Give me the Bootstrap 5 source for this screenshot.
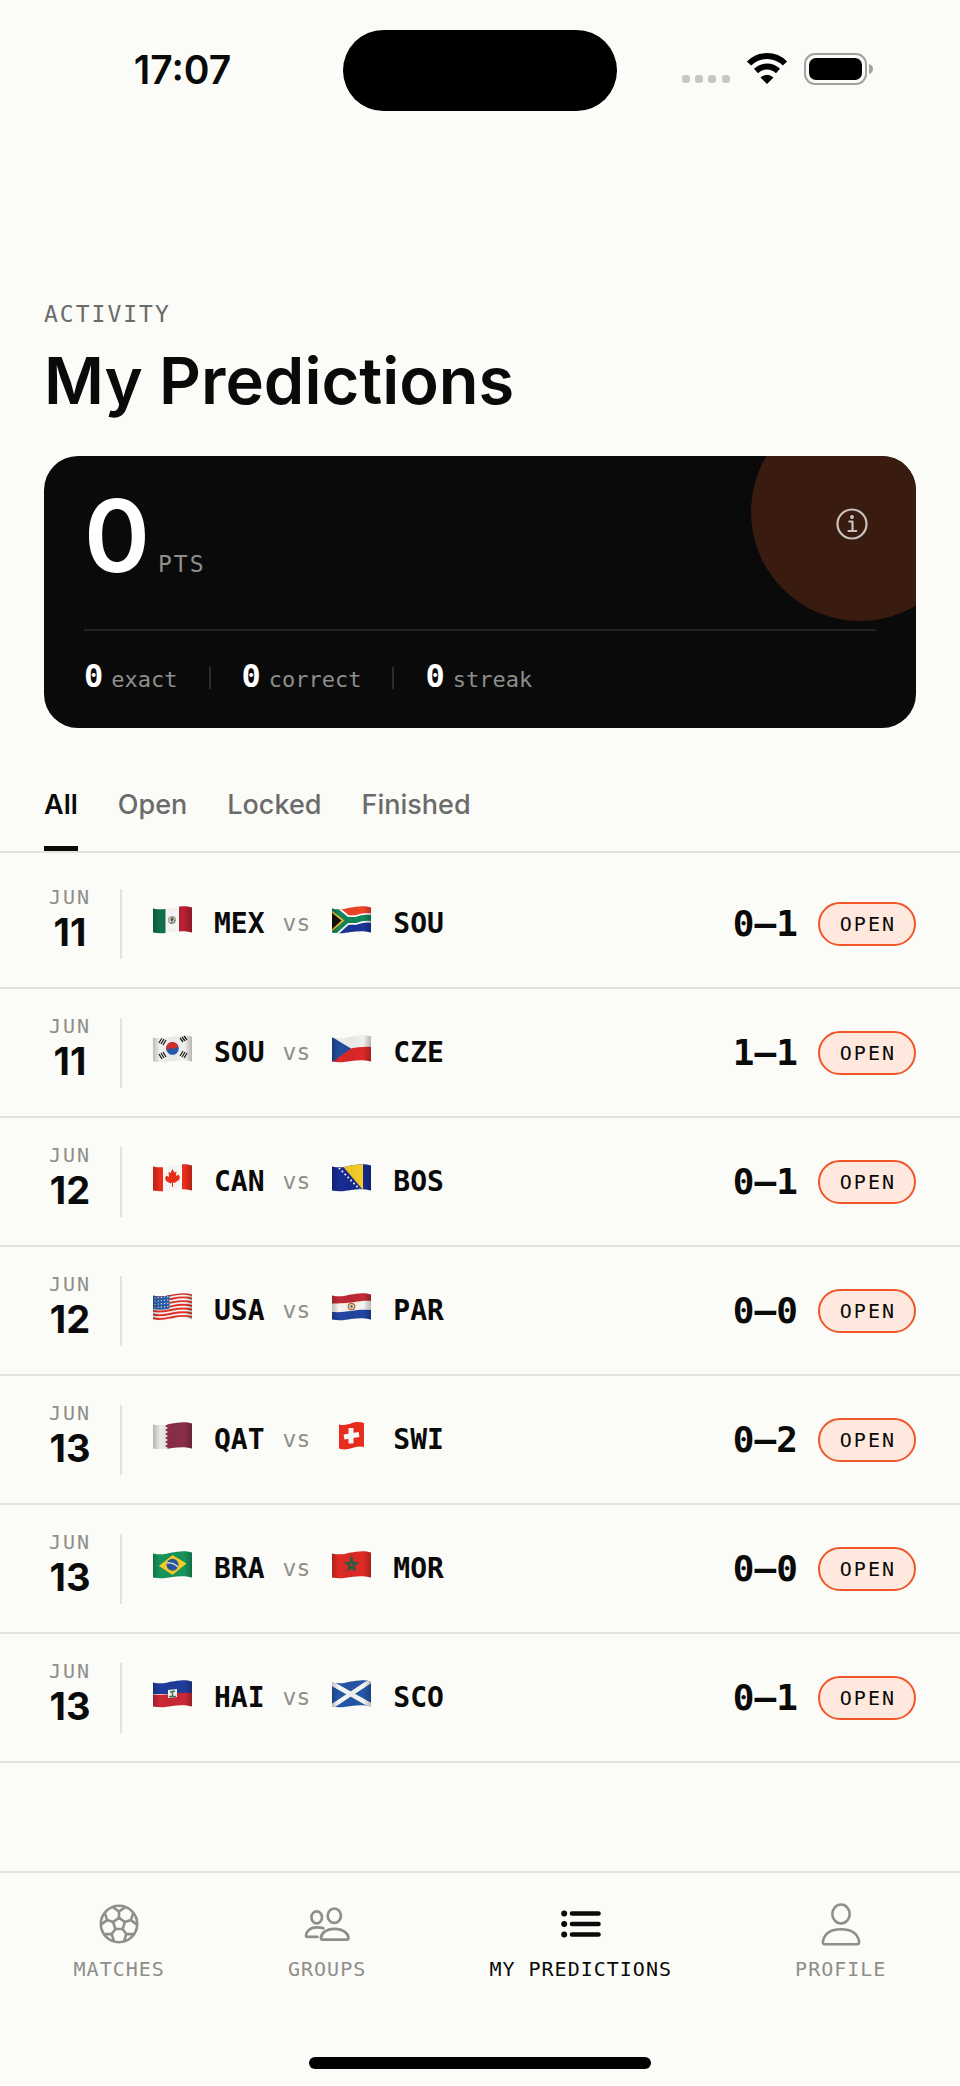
<!DOCTYPE html>
<html lang="en">
<head>
    <meta charset="UTF-8">
    <meta name="viewport" content="width=device-width, initial-scale=1.0">
    <title>My Predictions</title>
    <link href="https://cdn.jsdelivr.net/npm/bootstrap@5.3.0/dist/css/bootstrap.min.css" rel="stylesheet">
    <style>
        body {
            background-color: #fbfbf7;
            color: #0a0a0a;
            font-family: Inter, 'Liberation Sans', sans-serif;
        }
        svg {
            display: block;
            flex-shrink: 0;
        }
        .mono {
            font-family: 'DejaVu Sans Mono', 'Liberation Mono', monospace;
        }
        .gutter {
            padding-left: 44px;
            padding-right: 44px;
        }

        /* Status bar */
        .status-bar {
            display: grid;
            grid-template-columns: 1fr 274px 1fr;
            padding-top: 30px;
        }
        .clock {
            font-size: 39px;
            font-weight: 600;
            line-height: 80px;
            padding-left: 22px;
        }
        .island {
            height: 81px;
            background: #000;
            border-radius: 41px;
        }
        .status-icons {
            gap: 16px;
            padding-right: 87px;
            padding-bottom: 4px;
        }

        /* Heading */
        .page-head {
            padding-top: 191px;
            padding-bottom: 35px;
        }
        .eyebrow {
            font-size: 23px;
            line-height: 24px;
            letter-spacing: 2px;
            color: #6b6b6b;
            margin-bottom: 15px;
        }
        h1 {
            font-size: 65px;
            font-weight: 600;
            line-height: 80px;
        }

        /* Points card */
        .points-card {
            background: #0a0a0a;
            color: #fff;
            border-radius: 34px;
            padding: 30px 40px 32px;
            margin: 0 44px;
        }
        .glow {
            width: 218px;
            height: 218px;
            top: -53px;
            right: -53px;
            background: #3a1b10;
        }
        .total {
            font-size: 100px;
            font-weight: 600;
            line-height: 100px;
        }
        .unit {
            font-size: 23px;
            letter-spacing: 2px;
            color: #8e8e8a;
        }
        .info-btn {
            width: 48px;
            height: 48px;
            margin-top: 14px;
            color: #c9c3c0;
        }
        .stats {
            border-top: 2px solid #232323;
            margin-top: 43px;
            padding-top: 29px;
        }
        .stat-value {
            font-size: 32px;
            font-weight: 700;
            line-height: 32px;
        }
        .stat-name {
            font-size: 22px;
            line-height: 32px;
            color: #8e8e8a;
        }
        .stat-rule {
            width: 2px;
            height: 22px;
            margin: 0 31px;
            background: #2c2c2c;
        }

        /* Filter tabs */
        .filters {
            gap: 40px;
            margin-top: 60px;
            border-bottom: 2px solid #e2e2de;
        }
        .filter-tab {
            font-size: 27px;
            font-weight: 500;
            line-height: 34px;
            padding: 0 0 24px;
            color: #6b6b6b;
            background: none;
            border: 0;
            border-bottom: 5px solid transparent;
        }
        .filter-tab.active {
            font-weight: 600;
            color: #0a0a0a;
            border-bottom-color: #0a0a0a;
        }

        /* Matches */
        .match-list {
            padding-top: 7px;
        }
        .match-row {
            height: 129px;
            border-bottom: 2px solid #e2e2de;
        }
        .match-date {
            width: 52px;
            padding-bottom: 8px;
        }
        .month {
            font-size: 20px;
            line-height: 24px;
            letter-spacing: 2px;
            color: #8e8e8a;
        }
        .day {
            font-size: 38px;
            font-weight: 700;
            line-height: 46px;
        }
        .date-rule {
            width: 2px;
            height: 70px;
            margin: 0 31px 0 24px;
            background: #e2e2de;
        }
        .team {
            gap: 22px;
            font-size: 28px;
            font-weight: 700;
        }
        .versus {
            font-size: 23px;
            margin: 0 22px 0 18px;
            color: #8e8e8a;
        }
        .score {
            font-size: 36px;
            font-weight: 700;
            margin-right: 20px;
        }
        .status-pill {
            font-size: 20px;
            line-height: 40px;
            letter-spacing: 2px;
            padding: 0 18px 0 20px;
            border: 2px solid #f0562a;
            background: #ffe8dd;
        }

        /* Bottom navigation */
        .tab-bar {
            border-top: 2px solid #e2e2de;
            padding: 29px 12px 0;
        }
        .tab-link {
            gap: 11px;
            font-size: 20px;
            line-height: 24px;
            letter-spacing: 1px;
            color: #8e8e8a;
            text-decoration: none;
        }
        .tab-link.active {
            color: #0a0a0a;
        }
        .tab-icon {
            height: 44px;
        }
        .home-bar {
            width: 342px;
            height: 12px;
            margin: 76px auto 17px;
            background: #000;
        }
    </style>
</head>
<body>
    <!-- Shared shapes for the flags -->
    <svg width="0" height="0" class="position-absolute" aria-hidden="true">
        <defs>
            <clipPath id="wave"><path d="M0 3.5C8 5.5 14 3.5 19 2.5S32 0 39 2.5V27.5C32 25.5 25 26 19 27S8 29 0 27.5Z"/></clipPath>
            <clipPath id="waveSmall"><path d="M7 3.5C13 5 17 3 20 2S28 .5 32 2V26C28 25 24 25.5 20 27S12 29 7 27.5Z"/></clipPath>
            <linearGradient id="shade">
                <stop offset="0" stop-color="#000" stop-opacity=".22"/>
                <stop offset=".18" stop-color="#000" stop-opacity="0"/>
                <stop offset=".5" stop-color="#000" stop-opacity=".04"/>
                <stop offset=".8" stop-color="#000" stop-opacity="0"/>
                <stop offset="1" stop-color="#000" stop-opacity=".25"/>
            </linearGradient>
        </defs>
    </svg>

    <div class="d-flex flex-column min-vh-100">
        <header class="status-bar">
            <div class="clock text-center">17:07</div>
            <div class="island"></div>
            <div class="status-icons d-flex align-items-center justify-content-end">
                <svg width="48" height="32" viewBox="0 0 48 32" fill="#c6c6c3" aria-hidden="true">
                    <rect x="0" y="22" width="8" height="8" rx="3"/><rect x="13" y="22" width="8" height="8" rx="3"/>
                    <rect x="26" y="22" width="8" height="8" rx="3"/><rect x="40" y="22" width="8" height="8" rx="3"/>
                </svg>
                <svg width="42" height="32" viewBox="0 0 42 32" aria-hidden="true">
                    <path d="M3 10.5C13 .5 29 .5 39 10.5" fill="none" stroke="#000" stroke-width="6"/>
                    <path d="M10 18C16.500 12 25.500 12 32 18" fill="none" stroke="#000" stroke-width="6"/>
                    <path d="M14.500 24.500Q21 19 27.500 24.500L21 31Z"/>
                </svg>
                <svg width="69" height="32" viewBox="0 0 69 32" aria-hidden="true">
                    <rect x="1" y="1" width="61" height="30" rx="10" fill="none" stroke="#a2a2a0" stroke-width="2"/>
                    <rect x="5" y="5" width="53" height="22" rx="7"/>
                    <path d="M65 11Q69 12 69 16T65 21Z" fill="#a2a2a0"/>
                </svg>
            </div>
        </header>

        <main>
            <div class="page-head gutter">
                <p class="eyebrow mono">ACTIVITY</p>
                <h1 class="mb-0">My Predictions</h1>
            </div>

            <section class="points-card position-relative overflow-hidden">
                <div class="glow position-absolute rounded-circle"></div>
                <div class="position-relative d-flex justify-content-between align-items-start">
                    <div class="d-flex align-items-baseline gap-2">
                        <span class="total">0</span>
                        <span class="unit mono">PTS</span>
                    </div>
                    <button type="button" class="info-btn btn p-0 border-0 d-flex align-items-center justify-content-center" aria-label="Scoring rules">
                        <svg width="32" height="32" viewBox="0 0 32 32" fill="none" stroke="currentColor" stroke-width="2.2" stroke-linecap="round" stroke-linejoin="round" aria-hidden="true">
                            <circle cx="16" cy="16" r="14.5"/>
                            <path d="M13.3 13.5H16.5V22.8M12.5 23H20.2"/>
                            <circle cx="16" cy="9" r="1.2" fill="currentColor" stroke-width="1.5"/>
                        </svg>
                    </button>
                </div>
                <div class="stats mono position-relative d-flex align-items-center">
                    <div class="d-flex align-items-baseline gap-2"><span class="stat-value">0</span><span class="stat-name">exact</span></div>
                    <div class="stat-rule"></div>
                    <div class="d-flex align-items-baseline gap-2"><span class="stat-value">0</span><span class="stat-name">correct</span></div>
                    <div class="stat-rule"></div>
                    <div class="d-flex align-items-baseline gap-2"><span class="stat-value">0</span><span class="stat-name">streak</span></div>
                </div>
            </section>

            <div class="filters gutter d-flex">
                <button type="button" class="filter-tab active">All</button>
                <button type="button" class="filter-tab">Open</button>
                <button type="button" class="filter-tab">Locked</button>
                <button type="button" class="filter-tab">Finished</button>
            </div>

            <ul class="match-list list-unstyled mb-0" id="matchList"></ul>
        </main>

        <footer class="mt-auto">
            <nav class="tab-bar mono d-flex justify-content-around">
                <a href="#matches" class="tab-link d-flex flex-column align-items-center">
                    <span class="tab-icon d-flex align-items-center">
                        <svg width="40" height="40" viewBox="-20 -20 40 40" fill="none" stroke="currentColor" stroke-width="2.6" stroke-linejoin="round" aria-hidden="true">
                            <circle r="18.2"/>
                            <path d="M0-6.2L5.9-1.9L3.6 5H-3.6L-5.9-1.9Z"/>
                            <path d="M0-6.2V-12.5M5.9-1.9L11.9-3.9M3.6 5L7.3 10.1M-3.6 5L-7.3 10.1M-5.9-1.9L-11.9-3.9"/>
                            <path d="M-6.2-16.9L0-12.5L6.2-16.9M14.2-11.1L11.9-3.9L18 .6M14.9 10.1H7.3L5 17.3M-14.9 10.1H-7.3L-5 17.3M-14.2-11.1L-11.9-3.9L-18 .6"/>
                        </svg>
                    </span>
                    MATCHES
                </a>
                <a href="#groups" class="tab-link d-flex flex-column align-items-center">
                    <span class="tab-icon d-flex align-items-center">
                        <svg width="48" height="35" viewBox="0 0 48 35" fill="none" stroke="currentColor" stroke-width="2.7" stroke-linecap="round" stroke-linejoin="round" aria-hidden="true">
                            <ellipse cx="31.3" cy="8.7" rx="6.6" ry="7.2"/>
                            <path d="M18 31C18 27 22.5 21.8 31.5 21.8S45.5 27 45.5 31Q45.5 32.7 44 32.7H19.5Q18 32.7 18 31Z"/>
                            <ellipse cx="13.7" cy="10.3" rx="5.3" ry="6"/>
                            <path d="M20.5 21.3C18.7 20.6 16.5 20.3 13.7 20.3C7 20.3 3 25 3 28.5Q3 29.8 4.5 29.8H14.5"/>
                        </svg>
                    </span>
                    GROUPS
                </a>
                <a href="#predictions" class="tab-link active d-flex flex-column align-items-center" aria-current="page">
                    <span class="tab-icon d-flex align-items-center">
                        <svg width="40" height="28" viewBox="0 0 40 28" stroke="currentColor" stroke-width="4.6" stroke-linecap="round" aria-hidden="true">
                            <path d="M11 3.5H37.5M11 14H37.5M11 24.5H37.5"/>
                            <g fill="currentColor" stroke="none"><circle cx="3.2" cy="3.5" r="3"/><circle cx="3.2" cy="14" r="3"/><circle cx="3.2" cy="24.5" r="3"/></g>
                        </svg>
                    </span>
                    MY PREDICTIONS
                </a>
                <a href="#profile" class="tab-link d-flex flex-column align-items-center">
                    <span class="tab-icon d-flex align-items-center">
                        <svg width="40" height="43" viewBox="0 0 40 43" fill="none" stroke="currentColor" stroke-width="2.6" stroke-linejoin="round" aria-hidden="true">
                            <ellipse cx="20" cy="11" rx="8.7" ry="9.5"/>
                            <path d="M2 38C3.5 31 9.5 26.2 20 26.2S36.5 31 38 38Q38.5 41.3 36 41.3H4Q1.5 41.3 2 38Z"/>
                        </svg>
                    </span>
                    PROFILE
                </a>
            </nav>
            <div class="home-bar rounded-pill"></div>
        </footer>
    </div>

    <script src="https://cdn.jsdelivr.net/npm/bootstrap@5.3.0/dist/js/bootstrap.bundle.min.js"></script>
    <script>
        // American stripes follow the wave of the cloth
        let stripes = '';
        for (let i = 0; i < 7; i++) {
            const y = 4 + i * 3.7;
            stripes += `<path d="M0 ${y}C8 ${y + 2} 14 ${y} 19 ${y - 1}S32 ${y - 3.5} 39 ${y - 1}" fill="none" stroke="#e0322b" stroke-width="1.9"/>`;
        }

        // White stars along the diagonal of the Bosnian flag
        let diagonalStars = '';
        for (let i = 0; i < 8; i++) {
            diagonalStars += `<circle cx="${7.5 + i * 2.9}" cy="${5.5 + i * 3}" r="1" fill="#fff"/>`;
        }

        let unionStars = '';
        for (let i = 0; i < 20; i++) {
            unionStars += `<circle cx="${2 + (i % 5) * 3.2}" cy="${6 + Math.floor(i / 5) * 3.2 - (i % 5) * 0.3}" r=".7" fill="#e5dfbd"/>`;
        }

        const flags = {
            mexico: `<path fill="#fafaf8" d="M0 0H39V30H0Z"/><path fill="#12704a" d="M0 0H12.5V30H0Z"/><path fill="#b92032" d="M26 0H39V30H26Z"/>
                <circle cx="19" cy="15" r="3.3" fill="none" stroke="#a9aaa0" stroke-width="1.5"/><path d="M17 15L19 12L21 14L19 17Z" fill="#6f5138"/><path d="M17 18Q20 19 22 15" fill="none" stroke="#568269"/>`,
            southAfrica: `<path fill="#f04427" d="M0 0H39V15H0Z"/><path fill="#1b369a" d="M0 15H39V30H0Z"/>
                <path d="M-2 1L15 15H24Q31 12 40 13M-2 30L15 15" fill="none" stroke="#fff" stroke-width="9.5"/>
                <path d="M-2 1L15 15H24Q31 12 40 13M-2 30L15 15" fill="none" stroke="#13865a" stroke-width="6"/>
                <path d="M-1 6L11 15.5L-1 26Z" fill="#111" stroke="#f3b928" stroke-width="1.7"/>`,
            southKorea: `<path fill="#f1f1ef" d="M0 0H39V30H0Z"/><circle cx="19.5" cy="14.5" r="6.3" fill="#265bb0"/>
                <path d="M13.5 16.5A6.3 6.3 0 0 1 25.3 12Q23 15.5 19.5 14.5T13.5 16.5" fill="#d92f2b"/>
                <g stroke="#222" stroke-width="1.3"><path d="M6 9L9 4M8 10L11 5M10 11L13 6"/><path d="M27 4L30 8M29 3L32 7M31 2L34 6"/><path d="M6 20L9 25M8 19L11 24M10 18L13 23"/><path d="M27 22L30 17M29 23L32 18M31 24L34 19"/></g>`,
            czechia: `<path fill="#f0f0ee" d="M0 0H39V15H0Z"/><path fill="#dc2829" d="M0 16C16 17 22 12 39 13V30H0Z"/><path fill="#234d9c" d="M0 3L19 14.5L0 28Z"/>`,
            canada: `<path fill="#fafaf8" d="M0 0H39V30H0Z"/><path fill="#ec2d1c" d="M0 0H10V30H0ZM29 0H39V30H29Z"/>
                <path fill="#ec3019" d="M19.5 6L21.5 9.5L23.5 8.5L23 13L25.5 11.5L27 14L26 17L21.5 20L20 19.5V24H19V19.5L17.5 20.5L13 18L12 15L13.5 12.5L16 14L15.5 9L17.5 10Z"/>`,
            bosnia: `<path fill="#172c91" d="M0 0H39V30H0Z"/><path fill="#f6cc28" d="M8 0H31V27Z"/>${diagonalStars}`,
            usa: `<path fill="#faf8f3" d="M0 0H39V30H0Z"/>${stripes}<path fill="#285dad" d="M0 3.5C8 5.5 13 3.5 16.5 3V16.5C11 18 5 18 0 17Z"/>${unionStars}`,
            paraguay: `<path fill="#f5f4ef" d="M0 0H39V30H0Z"/><path fill="#c12936" d="M0 0H39V9C27 8 22 12 0 11.5Z"/><path fill="#2145a2" d="M0 20C16 21 22 17 39 18V30H0Z"/>
                <circle cx="19.5" cy="14.5" r="3.2" fill="#d8e0cf" stroke="#d0683c" stroke-width="1.3"/><circle cx="19.5" cy="14.5" r="1.2" fill="#48705b"/>`,
            qatar: `<path fill="#e8e8e6" d="M0 0H39V30H0Z"/><path fill="#8b2f49" d="M39 0H12L15 3L12 5L15 7L12 9L15 11L12 13L15 15L12 17L15 19L12 21L15 23L12 25L15 27L12 30H39Z"/>`,
            switzerland: `<path fill="#eb2d1e" d="M0 0H39V30H0Z"/><path d="M12 16L27 13.5M19 7V22.5" stroke="#fff" stroke-width="5"/>`,
            brazil: `<path fill="#17945c" d="M0 0H39V30H0Z"/><path fill="#f8cf26" d="M19.5 5L33.5 13.5L19.5 25L6 16Z"/><circle cx="19.5" cy="14.8" r="6" fill="#2857a5"/>
                <path d="M14 13Q20 12 25 17" fill="none" stroke="#e7ecdf" stroke-width="1.3"/>`,
            morocco: `<path fill="#df2b25" d="M0 0H39V30H0Z"/><path d="M19.5 7.5L22.8 20L13.5 12.8H25.5L16.2 20Z" fill="none" stroke="#246144" stroke-width="1.6"/>`,
            haiti: `<path fill="#203d9d" d="M0 0H39V15H0Z"/><path fill="#cb2836" d="M0 15.5C14 17 24 13 39 14V30H0Z"/><path fill="#f7f7f3" d="M15 11L24 10V18L15 19Z"/>
                <path d="M19.5 12V17M17 13L22 12M16 17.5H23" stroke="#42775b" stroke-width="1.5"/>`,
            scotland: `<path fill="#2557a8" d="M0 0H39V30H0Z"/><path d="M-1 4L40 27M-1 28L40 1" stroke="#f6f6f4" stroke-width="4.5"/>`
        };

        const matches = [
            {day: 11, home: ['mexico', 'MEX'], away: ['southAfrica', 'SOU'], score: '0–1'},
            {day: 11, home: ['southKorea', 'SOU'], away: ['czechia', 'CZE'], score: '1–1'},
            {day: 12, home: ['canada', 'CAN'], away: ['bosnia', 'BOS'], score: '0–1'},
            {day: 12, home: ['usa', 'USA'], away: ['paraguay', 'PAR'], score: '0–0'},
            {day: 13, home: ['qatar', 'QAT'], away: ['switzerland', 'SWI'], score: '0–2'},
            {day: 13, home: ['brazil', 'BRA'], away: ['morocco', 'MOR'], score: '0–0'},
            {day: 13, home: ['haiti', 'HAI'], away: ['scotland', 'SCO'], score: '0–1'}
        ];

        function team([country, code]) {
            const clip = country === 'switzerland' ? 'waveSmall' : 'wave';
            return `
                <div class="team d-flex align-items-center">
                    <svg class="mb-2" width="39" height="30" viewBox="0 0 39 30" aria-hidden="true">
                        <g clip-path="url(#${clip})">${flags[country]}<path d="M0 0H39V30H0Z" fill="url(#shade)"/></g>
                    </svg>
                    <span>${code}</span>
                </div>`;
        }

        // Build one row per match
        const matchList = document.getElementById('matchList');
        matches.forEach(match => {
            const row = document.createElement('li');
            row.className = 'match-row gutter d-flex align-items-center';
            row.innerHTML = `
                <div class="match-date text-center">
                    <div class="month mono">JUN</div>
                    <div class="day">${match.day}</div>
                </div>
                <div class="date-rule"></div>
                <div class="mono d-flex align-items-center flex-grow-1">
                    ${team(match.home)}
                    <span class="versus">vs</span>
                    ${team(match.away)}
                </div>
                <span class="score mono">${match.score}</span>
                <span class="status-pill mono rounded-pill">OPEN</span>
            `;
            matchList.appendChild(row);
        });

        // Switch the active filter
        const tabs = document.querySelectorAll('.filter-tab');
        tabs.forEach(tab => {
            tab.addEventListener('click', () => {
                tabs.forEach(other => other.classList.remove('active'));
                tab.classList.add('active');
            });
        });
    </script>
</body>
</html>
